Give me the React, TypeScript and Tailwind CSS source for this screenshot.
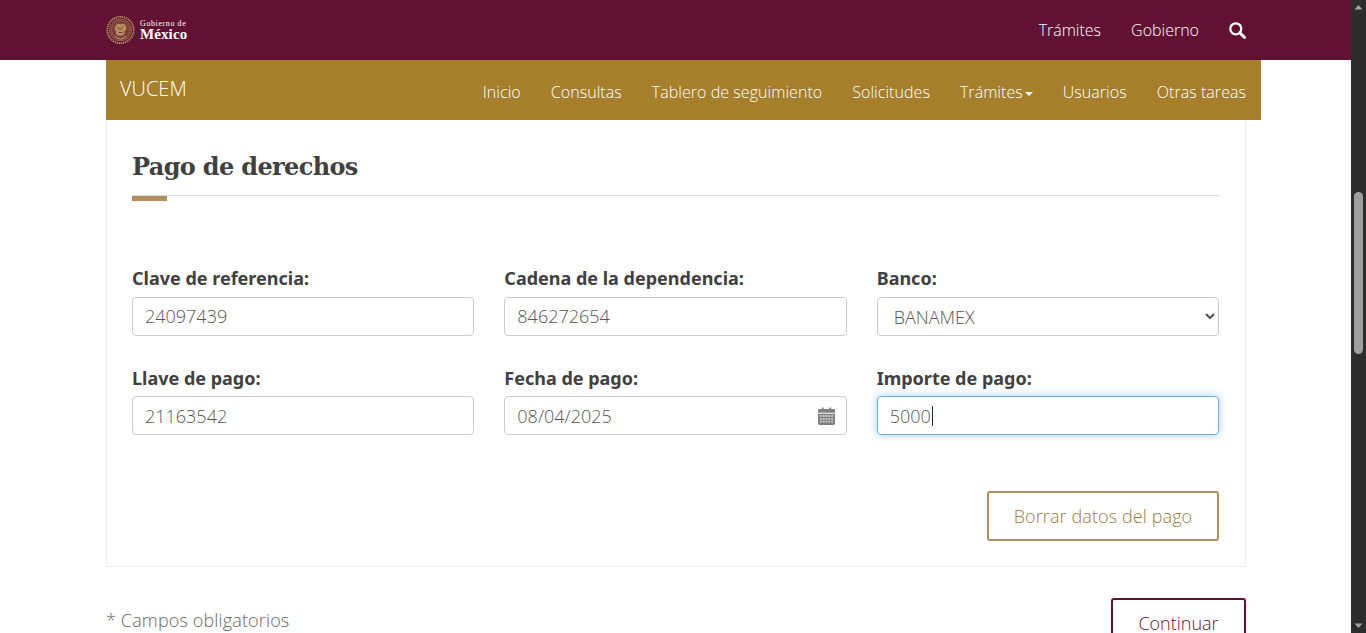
const sans = "font-['Open_Sans','Noto_Sans',sans-serif]";

function Emblem() {
  return (
    <svg width="29" height="30" viewBox="0 0 29 30" className="shrink-0">
      <circle cx="14.5" cy="15" r="13.2" fill="none" stroke="#b38e5d" strokeWidth="1.8" strokeDasharray="1.4 0.7" />
      <circle cx="14.5" cy="15" r="11" fill="#7a3b3c" stroke="#a57f52" strokeWidth="0.7" />
      <circle cx="14.5" cy="15" r="8.8" fill="none" stroke="#b38e5d" strokeWidth="0.7" strokeDasharray="1 1" />
      <path d="M9.500 11c1.500-2.500 3.500-3 5-1.500 2-1.500 4.500-.5 5.500 1.500 1 2.500 0 4.500-1.500 5.500.5 2-.5 3-1.500 4h-5c-2-1-2.500-2.500-2-4.500-1.500-1-1.500-3.500-.5-5Z" fill="#b38e5d" />
      <path d="M9 21c2 2 3.500 3 5.500 3s3.500-1 5.500-3" fill="none" stroke="#c7a16a" strokeWidth="1" />
      <path d="M11.500 12.500l3 2 3-3M12.500 17.500h4" fill="none" stroke="#6e2a35" strokeWidth="0.9" />
    </svg>
  );
}

function SearchIcon() {
  return (
    <svg width="17" height="17" viewBox="0 0 17 17" className="shrink-0">
      <circle cx="6.800" cy="6.800" r="5.500" fill="none" stroke="white" strokeWidth="2.300" />
      <path d="M10.800 10.800l4.700 4.700" fill="none" stroke="white" strokeWidth="3" strokeLinecap="round" />
    </svg>
  );
}

function CalendarIcon() {
  return (
    <svg width="17" height="18" viewBox="0 0 18 19" className="shrink-0">
      <path d="M1.500 2H4V0.500h2V2h6V0.500h2V2h2.500A1.500 1.500 0 0 1 18 3.500V6H0V3.500A1.500 1.500 0 0 1 1.500 2Z" fill="#808080" />
      <path d="M0 7h18v10.500a1.500 1.500 0 0 1-1.500 1.500h-15A1.500 1.500 0 0 1 0 17.500Z" fill="#808080" />
      <path
        d="M2 8.500h2v2H2zM5 8.500h2v2H5zM8 8.500h2v2H8zM11 8.500h2v2h-2zM14 8.500h2v2h-2zM2 11.500h2v2H2zM5 11.500h2v2H5zM8 11.500h2v2H8zM11 11.500h2v2h-2zM14 11.500h2v2h-2zM2 14.500h2v2H2zM5 14.500h2v2H5zM8 14.500h2v2H8zM11 14.500h2v2h-2zM14 14.500h2v2h-2z"
        fill="#c9c9c9"
      />
    </svg>
  );
}

function Label({ children }: { children: string }) {
  return <label className="block h-[25px] text-[18px] leading-[25px] font-bold text-[#404041] font-['Noto_Sans',sans-serif]">{children}</label>;
}

function Field({ label, value, icon, second }: { label: string; value: string; icon?: boolean; second?: boolean }) {
  return (
    <div>
      <Label>{label}</Label>
      <div className={`${second ? "mt-[5px] pt-[1px]" : "mt-[6px]"} flex h-[39px] items-center justify-between rounded-[4px] border border-[#cccccc] pl-[12px] pr-[11px] text-[18px] font-light text-[#555555]`}>
        <span>{value}</span>
        {icon && <CalendarIcon />}
      </div>
    </div>
  );
}

function ScrollArrow({ up }: { up: boolean }) {
  return (
    <svg width="15" height="15" viewBox="0 0 15 15">
      <path d={up ? "M3.500 9.500h8L7.500 5Z" : "M3.500 5.500h8L7.500 10Z"} fill="#a3a3a3" />
    </svg>
  );
}

export default function App() {
  return (
    <div className={`flex h-[633px] w-[1366px] overflow-hidden bg-white ${sans}`}>
      <main className="w-[1351px] shrink-0">
        <header className="flex h-[60px] items-center bg-[#611232] pl-[106px] pr-[105px]">
          <div className="flex items-center gap-[5px]">
            <Emblem />
            <div className="font-['Liberation_Serif',serif] text-white">
              <div className="mt-[1px] text-[8px] leading-[8px] tracking-[0.6px]">Gobierno de</div>
              <div className="text-[15px] font-bold leading-[13px] tracking-[0.1px]">México</div>
            </div>
          </div>
          <nav className="ml-auto flex items-center gap-[30px] text-[16px] font-light text-white">
            <span>Trámites</span>
            <span>Gobierno</span>
            <SearchIcon />
          </nav>
        </header>

        <div className="ml-[106px] flex h-[60px] w-[1155px] bg-[#a57f2c] pl-[14px] pr-[15px] font-light text-white">
          <span className="mt-[15px] text-[20px] leading-[27px]">VUCEM</span>
          <nav className="ml-auto mt-[21px] flex items-start gap-[30px] text-[16px] leading-[22px] tracking-[0.05px]">
            <span>Inicio</span>
            <span>Consultas</span>
            <span>Tablero de seguimiento</span>
            <span>Solicitudes</span>
            <span className="flex items-center">
              Trámites
              <span className="ml-[2px] mt-[3px] border-x-[4px] border-t-[4px] border-x-transparent border-t-white" />
            </span>
            <span>Usuarios</span>
            <span>Otras tareas</span>
          </nav>
        </div>

        <section className="ml-[106px] h-[447px] w-[1140px] border-x border-b border-[#eeeeee] px-[25px]">
          <h1 className="h-[75px] pt-[29px] font-['DejaVu_Serif',serif] text-[24px] leading-[36px] font-bold tracking-[-0.65px] text-[#404041]">Pago de derechos</h1>
          <div className="h-px bg-[#dddddd]" />
          <div className="h-[5px] w-[35px] bg-[#b38e5d]" />

          <div className="mr-px mt-[65px] grid grid-cols-3 gap-x-[30px] gap-y-[30px]">
            <Field label="Clave de referencia:" value="24097439" />
            <Field label="Cadena de la dependencia:" value="846272654" />
            <div>
              <Label>Banco:</Label>
              <select
                defaultValue="BANAMEX"
                className="mt-[6px] h-[39px] w-full rounded-[4px] border border-[#cccccc] bg-white pl-[12px] text-[18px] font-light text-[#555555]"
              >
                <option>BANAMEX</option>
              </select>
            </div>
            <Field label="Llave de pago:" value="21163542" second />
            <Field label="Fecha de pago:" value="08/04/2025" icon second />
            <div>
              <Label>Importe de pago:</Label>
              <div className="mt-[5px] flex h-[39px] items-center rounded-[4px] border border-[#66afe9] pl-[12px] pt-[1px] text-[18px] font-light text-[#555555] shadow-[0_0_8px_rgba(102,175,233,0.6)]">
                <span>5000</span>
                <span className="ml-[1px] h-[20px] w-px bg-[#222222]" />
              </div>
            </div>
          </div>

          <div className="mr-px mt-[56px] flex justify-end">
            <button className="h-[50px] w-[232px] rounded-[3px] border-2 border-[#b38e5d] text-[18px] font-light tracking-[0.1px] text-[#9c7a45]">Borrar datos del pago</button>
          </div>
        </section>

        <div className="ml-[106px] mt-[31px] flex w-[1140px] items-start justify-between">
          <span className="mt-[10px] text-[18px] font-light leading-[25px] tracking-[0.14px] text-[#666666]">* Campos obligatorios</span>
          <button className="h-[50px] w-[135px] rounded-[3px] border-2 border-[#611232] text-[18px] font-light text-[#611232]">Continuar</button>
        </div>
      </main>

      <aside className="flex h-[633px] w-[15px] shrink-0 flex-col bg-[#2c2c2c]">
        <ScrollArrow up />
        <div className="ml-[3px] mt-[177px] h-[162px] w-[9px] rounded-full bg-[#9f9f9f]" />
        <div className="mt-auto">
          <ScrollArrow up={false} />
        </div>
      </aside>
    </div>
  );
}
